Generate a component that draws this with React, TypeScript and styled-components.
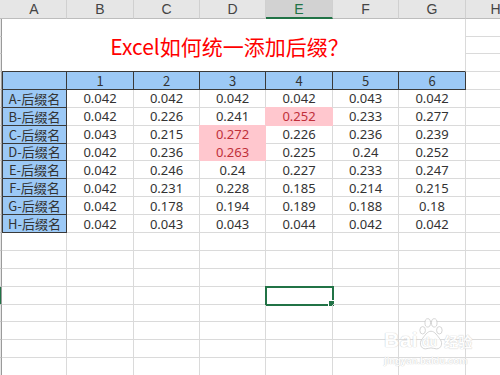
import React from "react";
import styled, { createGlobalStyle, css } from "styled-components";

const GlobalStyle = createGlobalStyle`
  html, body {
    margin: 0;
    padding: 0;
    background: #fff;
    overflow: hidden;
  }
  body {
    font-family: "Noto Sans", "Noto Sans CJK SC", sans-serif;
  }
`;

const COLS = ["A", "B", "C", "D", "E", "F", "G", "H"];
const ROWS = [
  { name: "A-后缀名", vals: ["0.042", "0.042", "0.042", "0.042", "0.043", "0.042"] },
  { name: "B-后缀名", vals: ["0.042", "0.226", "0.241", "0.252", "0.233", "0.277"] },
  { name: "C-后缀名", vals: ["0.043", "0.215", "0.272", "0.226", "0.236", "0.239"] },
  { name: "D-后缀名", vals: ["0.042", "0.236", "0.263", "0.225", "0.24", "0.252"] },
  { name: "E-后缀名", vals: ["0.042", "0.246", "0.24", "0.227", "0.233", "0.247"] },
  { name: "F-后缀名", vals: ["0.042", "0.231", "0.228", "0.185", "0.214", "0.215"] },
  { name: "G-后缀名", vals: ["0.042", "0.178", "0.194", "0.189", "0.188", "0.18"] },
  { name: "H-后缀名", vals: ["0.042", "0.043", "0.043", "0.044", "0.042", "0.042"] },
];
// highlighted cells: "row-col"
const PINK = new Set(["1-3", "2-2", "3-2"]);
const EMPTY_ROWS = 8;
const SELECTED_ROW = 3; // index in empty rows (sheet row 16)

const Page = styled.div`
  position: relative;
  width: 500px;
  height: 375px;
  overflow: hidden;
`;

const Sheet = styled.div`
  display: grid;
  grid-template-columns: 2px 65px 67px 66px 66px 67px 66px 67px 60px;
  grid-template-rows: 19px repeat(3, 17.67px) repeat(17, 17.9px);
  font-size: 13px;
  color: #333;
`;

const Corner = styled.div`
  background: #e6e6e6;
  border-bottom: 1px solid #bdbdbd;
`;

const ColHead = styled.div<{ $active?: boolean }>`
  display: flex;
  align-items: center;
  justify-content: center;
  background: #e6e6e6;
  border-right: 1px solid #d0d0d0;
  border-bottom: 1px solid #bdbdbd;
  color: #444;
  font-size: 14px;
  font-family: "Liberation Sans", "Noto Sans", sans-serif;
  ${(p) =>
    p.$active &&
    css`
      background: #d2d2d2;
      color: #217346;
      border-bottom: 2px solid #217346;
    `}
`;

const RowHead = styled.div<{ $active?: boolean }>`
  background: ${(p) => (p.$active ? "#217346" : "#e6e6e6")};
  border-bottom: 1px solid #c6c6c6;
  border-right: 1px solid #9a9a9a;
`;

const Title = styled.div`
  grid-column: 2 / span 7;
  grid-row: span 3;
  display: flex;
  align-items: center;
  justify-content: center;
  padding-top: 2px;
  padding-right: 8px;
  border-right: 1px solid #dadada;
  border-bottom: 1px solid #3a3a3a;
  color: #ff0000;
  font-size: 21px;
  font-family: "Noto Sans CJK SC", "Noto Sans", sans-serif;
`;

const Cell = styled.div<{ $kind: "blank" | "data" | "pink" | "blue"; $left?: boolean; $selected?: boolean }>`
  position: relative;
  display: flex;
  align-items: center;
  justify-content: center;
  white-space: nowrap;
  border-right: 1px solid #dadada;
  border-bottom: 1px solid #dadada;
  ${(p) =>
    p.$kind === "blue" &&
    css`
      background: #9cc9f6;
      border-right-color: #3a3a3a;
      border-bottom-color: #3a3a3a;
      color: #333;
      font-family: "Noto Sans CJK SC", "Noto Sans", sans-serif;
    `}
  ${(p) =>
    p.$left &&
    css`
      border-left: 1px solid #3a3a3a;
    `}
  ${(p) =>
    p.$kind === "pink" &&
    css`
      background: #ffc7ce;
      border-color: #ffc7ce;
      box-shadow: -1px -1px 0 #ffc7ce;
      color: #c0303a;
    `}
  ${(p) =>
    p.$selected &&
    css`
      outline: 2px solid #217346;
      outline-offset: -1px;
      &::after {
        content: "";
        position: absolute;
        right: -3px;
        bottom: -3px;
        width: 5px;
        height: 5px;
        background: #217346;
        border: 1px solid #fff;
      }
    `}
`;

const Watermark = styled.div`
  position: absolute;
  left: 384px;
  top: 316px;
  color: #fff;
  font-family: "Liberation Sans", "Noto Sans CJK SC", sans-serif;
  text-shadow: 0 0 1px #c4c4c4, 0 0 1px #c4c4c4;
  opacity: 0.8;
`;

const MarkRow = styled.div`
  display: flex;
  align-items: flex-end;
  height: 36px;
`;

const BaiText = styled.span`
  font-size: 21px;
  font-weight: bold;
  line-height: 24px;
  letter-spacing: 0.5px;
`;

const Paw = styled.div`
  position: relative;
  width: 26px;
  height: 34px;
  margin-bottom: 1px;

  svg {
    position: absolute;
    inset: 0;
  }

  span {
    position: absolute;
    left: 4px;
    bottom: 2px;
    font-size: 12px;
    font-weight: bold;
  }
`;

const JingYan = styled.span`
  font-size: 14px;
  font-weight: bold;
  line-height: 20px;
`;

const Url = styled.div`
  font-size: 9.5px;
  font-weight: bold;
  margin-top: 3px;
`;

export default function App() {
  const cells: React.ReactNode[] = [];

  // column header row
  cells.push(<Corner key="corner" />);
  COLS.forEach((c) => cells.push(<ColHead key={"h" + c} $active={c === "E"}>{c}</ColHead>));

  // title rows (1-3)
  cells.push(<RowHead key="r1" />);
  cells.push(<Title key="title">Excel如何统一添加后缀？</Title>);
  cells.push(<Cell key="r1h" $kind="blank" />);
  cells.push(<RowHead key="r2" />);
  cells.push(<Cell key="r2h" $kind="blank" />);
  cells.push(<RowHead key="r3" />);
  cells.push(<Cell key="r3h" $kind="blank" />);

  // blue header row
  cells.push(<RowHead key="r4" />);
  cells.push(<Cell key="r4a" $kind="blue" $left />);
  [1, 2, 3, 4, 5, 6].forEach((n) =>
    cells.push(
      <Cell key={"r4" + n} $kind="blue">
        {n}
      </Cell>
    )
  );
  cells.push(<Cell key="r4h" $kind="blank" />);

  // data rows
  ROWS.forEach((row, ri) => {
    cells.push(<RowHead key={"rh" + ri} />);
    cells.push(
      <Cell key={"l" + ri} $kind="blue" $left>
        {row.name}
      </Cell>
    );
    row.vals.forEach((v, ci) =>
      cells.push(
        <Cell key={ri + "-" + ci} $kind={PINK.has(ri + "-" + ci) ? "pink" : "data"}>
          {v}
        </Cell>
      )
    );
    cells.push(<Cell key={"hx" + ri} $kind="blank" />);
  });

  // empty rows below
  for (let r = 0; r < EMPTY_ROWS; r++) {
    const active = r === SELECTED_ROW;
    cells.push(<RowHead key={"er" + r} $active={active} />);
    COLS.forEach((c) =>
      cells.push(<Cell key={"e" + r + c} $kind="blank" $selected={active && c === "E"} />)
    );
  }

  return (
    <Page>
      <GlobalStyle />
      <Sheet>{cells}</Sheet>
      <Watermark>
        <MarkRow>
          <BaiText>Bai</BaiText>
          <Paw>
            <svg width="26" height="34" viewBox="0 0 28 36">
              <g fill="#fff" stroke="#c8c8c8" strokeWidth="1">
                <ellipse cx="5" cy="14" rx="3" ry="4" />
                <ellipse cx="10.5" cy="6" rx="3" ry="4.5" />
                <ellipse cx="17.5" cy="6" rx="3" ry="4.5" />
                <ellipse cx="23" cy="14" rx="3" ry="4" />
                <path d="M14 15c-4 0-7 5-10 9-3 4-1 10 4 10 2 0 4-1 6-1s4 1 6 1c5 0 7-6 4-10-3-4-6-9-10-9z" />
              </g>
            </svg>
            <span>du</span>
          </Paw>
          <JingYan>经验</JingYan>
        </MarkRow>
        <Url>jingyan.baidu.com</Url>
      </Watermark>
    </Page>
  );
}
